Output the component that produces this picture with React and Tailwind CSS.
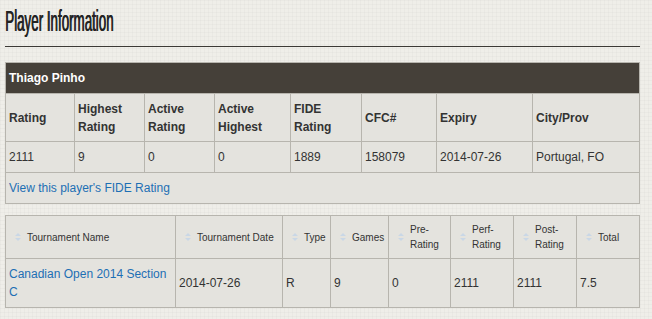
import React from "react";

function SortIcon() {
  return (
    <svg width="6" height="9" viewBox="0 0 6 9" className="absolute left-[9px] top-1/2 -translate-y-1/2">
      <path d="M0 3.5 L3 0.5 L6 3.5 Z" fill="#c9d7e6" />
      <path d="M0 5.5 L3 8.5 L6 5.5 Z" fill="#c9d7e6" />
    </svg>
  );
}

const t1cols = [69, 70, 70, 76, 71, 75, 96, 107];
const t2cols = [170, 107, 48, 58, 62, 63, 63, 63];

export default function App() {
  const td = "border border-[#b7b5ae] pl-[3px] pr-[3px] align-middle";
  const th2 = "relative border border-[#b7b5ae] pl-[21px] pr-[3px] align-middle text-left font-normal text-[10px] leading-[15px] text-[#333]";
  return (
    <div
      className="min-h-[319px] w-[652px] bg-[#efeee9] pl-[5px] text-[#333] bg-[linear-gradient(rgba(0,0,0,0.018)_1px,transparent_1px),linear-gradient(90deg,rgba(0,0,0,0.018)_1px,transparent_1px)] bg-[length:4px_4px]"
      style={{ fontFamily: '"Liberation Sans", Arial, sans-serif' }}
    >
      <div className="h-[46px] pt-[3px]">
        <div className="origin-left scale-x-[0.445] whitespace-nowrap text-[30px] font-normal leading-[36px] text-[#232323] [text-shadow:1.3px_0_0_#232323]" style={{ fontFamily: '"Liberation Sans", Arial, sans-serif' }}>
          Player Information
        </div>
      </div>
      <div className="h-px w-[635px] bg-[#3c3a36]" />
      <div className="h-[15px]" />
      <table className="w-[634px] table-fixed border-collapse bg-[#e4e3de] text-[12px] leading-[18px]">
        <colgroup>
          {t1cols.map((w, i) => (
            <col key={i} style={{ width: w }} />
          ))}
        </colgroup>
        <tbody>
          <tr className="h-[31px]">
            <td colSpan={8} className="border border-[#b7b5ae] bg-[#454039] pl-[3px] align-middle font-bold text-white">
              Thiago Pinho
            </td>
          </tr>
          <tr className="h-[48px] font-bold">
            <td className={td}>Rating</td>
            <td className={td}>Highest<br />Rating</td>
            <td className={td}>Active<br />Rating</td>
            <td className={td}>Active<br />Highest</td>
            <td className={td}>FIDE<br />Rating</td>
            <td className={td}>CFC#</td>
            <td className={td}>Expiry</td>
            <td className={td}>City/Prov</td>
          </tr>
          <tr className="h-[31px]">
            <td className={td}>2111</td>
            <td className={td}>9</td>
            <td className={td}>0</td>
            <td className={td}>0</td>
            <td className={td}>1889</td>
            <td className={td}>158079</td>
            <td className={td}>2014-07-26</td>
            <td className={td}>Portugal, FO</td>
          </tr>
          <tr className="h-[31px]">
            <td colSpan={8} className={td}>
              <a className="text-[#1d6fb4]">View this player's FIDE Rating</a>
            </td>
          </tr>
        </tbody>
      </table>
      <div className="h-[11px]" />
      <table className="w-[634px] table-fixed border-collapse bg-[#e4e3de] text-[12px] leading-[18px]">
        <colgroup>
          {t2cols.map((w, i) => (
            <col key={i} style={{ width: w }} />
          ))}
        </colgroup>
        <thead>
          <tr className="h-[43px]">
            <th className={th2}><SortIcon />Tournament Name</th>
            <th className={th2}><SortIcon />Tournament Date</th>
            <th className={th2}><SortIcon />Type</th>
            <th className={th2}><SortIcon />Games</th>
            <th className={th2}><SortIcon />Pre-<br />Rating</th>
            <th className={th2}><SortIcon />Perf-<br />Rating</th>
            <th className={th2}><SortIcon />Post-<br />Rating</th>
            <th className={th2}><SortIcon />Total</th>
          </tr>
        </thead>
        <tbody>
          <tr className="h-[49px]">
            <td className={td}><a className="text-[#1d6fb4]">Canadian Open 2014 Section C</a></td>
            <td className={td}>2014-07-26</td>
            <td className={td}>R</td>
            <td className={td}>9</td>
            <td className={td}>0</td>
            <td className={td}>2111</td>
            <td className={td}>2111</td>
            <td className={td}>7.5</td>
          </tr>
        </tbody>
      </table>
    </div>
  );
}
